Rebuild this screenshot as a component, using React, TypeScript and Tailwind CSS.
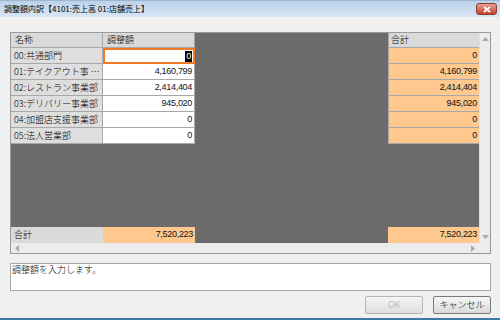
import React from "react";

const font = { fontFamily: '"Noto Sans CJK JP", "Noto Sans", sans-serif' };
const num = { fontFamily: '"Liberation Sans", Arial, sans-serif', letterSpacing: "-0.3px" };

const rows = [
  { name: "00:共通部門", value: "0", total: "0", edit: true },
  { name: "01:テイクアウト事 …", value: "4,160,799", total: "4,160,799" },
  { name: "02:レストラン事業部", value: "2,414,404", total: "2,414,404" },
  { name: "03:デリバリー事業部", value: "945,020", total: "945,020" },
  { name: "04:加盟店支援事業部", value: "0", total: "0" },
  { name: "05:法人営業部", value: "0", total: "0" },
];

function Row({ name, value, total, edit }: { name: string; value: string; total: string; edit?: boolean }) {
  return (
    <div className="flex h-[16px] shrink-0">
      <div className="w-[92px] shrink-0 bg-[#dedede] border-r border-b border-[#a8a8a8] pl-[3px] flex items-center text-[9px] font-light text-[#000] whitespace-nowrap overflow-hidden">
        {name}
      </div>
      {edit ? (
        <div style={num} className="w-[92px] shrink-0 bg-white border-2 border-[#f47a2a] flex items-center justify-end pr-[1px] text-[9px]">
          <span className="bg-black text-white leading-[11px] px-[1px]">{value}</span>
        </div>
      ) : (
        <div style={num} className="w-[92px] shrink-0 bg-white border-r border-b border-[#a8a8a8] pr-[2px] flex items-center justify-end text-[9px] text-[#111]">
          {value}
        </div>
      )}
      <div className="flex-1 bg-[#6b6b6b]" />
      <div style={num} className="w-[91px] shrink-0 bg-[#fec88f] border-l border-b border-[#a8a8a8] pr-[2px] flex items-center justify-end text-[9px] text-[#111]">
        {total}
      </div>
    </div>
  );
}

export default function App() {
  return (
    <div style={font} className="w-[500px] h-[320px] bg-[#f0f0f0] flex flex-col border-b-2 border-[#3a7ba3] overflow-hidden">
      {/* title bar */}
      <div className="h-[17px] shrink-0 bg-gradient-to-b from-[#bcd2ea] to-[#d8e6f5] flex items-center justify-between pl-[4px] pr-[3px] border-t border-[#9fb6d0]">
        <span className="text-[8px] text-[#000] leading-none">調整額内訳【4101:売上高 01:店舗売上】</span>
        <div className="w-[21px] h-[12px] rounded-[3px] bg-gradient-to-b from-[#e8a092] to-[#c23c28] border border-[#8a3b30] flex items-center justify-center">
          <svg width="8" height="7" viewBox="0 0 8 7">
            <path d="M1 1 L7 6 M7 1 L1 6" stroke="white" strokeWidth="1.8" />
          </svg>
        </div>
      </div>

      {/* body */}
      <div className="flex-1 flex flex-col pl-[10px] pr-[9px] pt-[15px]">
        {/* grid */}
        <div className="h-[222px] border border-[#9a9a9a] flex flex-col bg-[#6b6b6b]">
          <div className="flex flex-1 min-h-0">
            <div className="flex-1 flex flex-col">
              {/* header */}
              <div className="flex h-[15px] shrink-0">
                <div className="w-[92px] shrink-0 bg-[#dadada] border-r border-b border-[#a8a8a8] pl-[4px] flex items-center text-[9px] font-light text-[#000]">名称</div>
                <div className="w-[92px] shrink-0 bg-[#dadada] border-r border-b border-[#a8a8a8] pl-[4px] flex items-center text-[9px] font-light text-[#000]">調整額</div>
                <div className="flex-1 bg-[#6b6b6b]" />
                <div className="w-[91px] shrink-0 bg-[#dadada] border-l border-b border-[#a8a8a8] pl-[2px] flex items-center text-[9px] font-light text-[#000]">合計</div>
              </div>
              {rows.map((r) => (
                <Row key={r.name} {...r} />
              ))}
              <div className="flex-1 bg-[#6b6b6b]" />
              {/* total row */}
              <div className="flex h-[16px] shrink-0">
                <div className="w-[92px] shrink-0 bg-[#dadada] pl-[3px] flex items-center text-[9px] font-light text-[#000]">合計</div>
                <div style={num} className="w-[92px] shrink-0 bg-[#fec88f] pr-[2px] flex items-center justify-end text-[9px] text-[#111]">7,520,223</div>
                <div className="flex-1 bg-[#6b6b6b]" />
                <div style={num} className="w-[91px] shrink-0 bg-[#fec88f] pr-[2px] flex items-center justify-end text-[9px] text-[#111]">7,520,223</div>
              </div>
            </div>
            {/* vertical scrollbar */}
            <div className="w-[11px] shrink-0 bg-[#ececec] border-l border-[#e0e0e0] flex flex-col items-center justify-between py-[4px]">
              <svg width="7" height="4" viewBox="0 0 7 4"><path d="M0 4 L3.5 0 L7 4 Z" fill="#a8a8a8" /></svg>
              <svg width="7" height="4" viewBox="0 0 7 4"><path d="M0 0 L7 0 L3.5 4 Z" fill="#a8a8a8" /></svg>
            </div>
          </div>
          {/* horizontal scrollbar */}
          <div className="h-[10px] shrink-0 bg-[#ececec] flex items-center">
            <div className="flex-1 flex items-center justify-between px-[4px]">
              <svg width="4" height="7" viewBox="0 0 4 7"><path d="M4 0 L0 3.5 L4 7 Z" fill="#a8a8a8" /></svg>
              <svg width="4" height="7" viewBox="0 0 4 7"><path d="M0 0 L4 3.5 L0 7 Z" fill="#a8a8a8" /></svg>
            </div>
            <div className="w-[11px] shrink-0" />
          </div>
        </div>

        {/* message box */}
        <div className="mt-[9px] h-[28px] bg-white border border-[#a8a8a8] pl-[1px] text-[9px] font-light text-[#000] leading-[12px]">
          調整額を入力します。
        </div>

        {/* buttons */}
        <div className="mt-[5px] flex justify-end gap-[10px]">
          <button className="w-[58px] h-[18px] rounded-[2px] border border-[#b5b5b5] bg-gradient-to-b from-[#f6f6f6] to-[#dedede] text-[9px] font-light text-[#a8a8a8] flex items-center justify-center">
            OK
          </button>
          <button className="w-[58px] h-[18px] rounded-[2px] border border-[#7a7a7a] bg-gradient-to-b from-[#f6f6f6] to-[#dadada] text-[9px] font-light text-[#000] flex items-center justify-center">
            キャンセル
          </button>
        </div>
      </div>
    </div>
  );
}
